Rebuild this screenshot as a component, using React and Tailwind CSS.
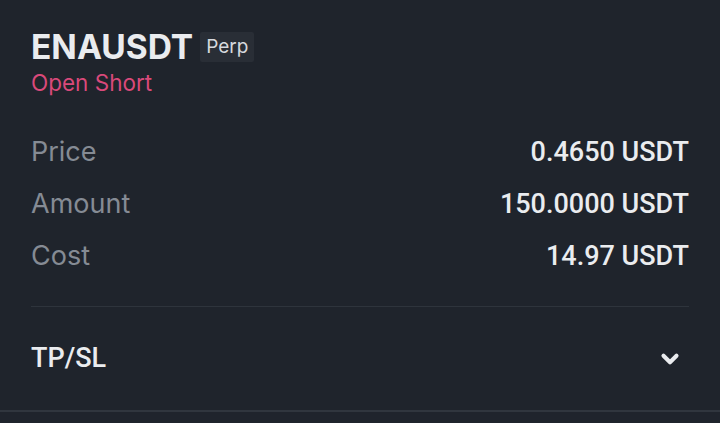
import { ChevronDown } from 'lucide-react';

const rows = [
  { label: 'Price', value: '0.4650 USDT' },
  { label: 'Amount', value: '150.0000 USDT' },
  { label: 'Cost', value: '14.97 USDT' },
];

export default function App() {
  return (
    <div className="w-[720px] h-[423px] bg-[#1f242c] overflow-hidden font-['Inter',sans-serif]">
      <div className="px-[31px] pt-[30px]">
        <div className="flex items-center gap-[7px]">
          <h1 className="text-[33.5px] leading-[34px] font-bold text-[#eaecef]">ENAUSDT</h1>
          <span className="bg-[#292e36] text-[#d6d9de] text-[19px] leading-[30px] px-[6px] rounded-[2px]">Perp</span>
        </div>
        <div className="mt-[5px] text-[22.5px] leading-[28px] text-[#d9497a]">Open Short</div>

        <div className="mt-[40px] flex flex-col gap-[22px]">
          {rows.map((r) => (
            <div key={r.label} className="flex items-center justify-between h-[30px]">
              <span className="text-[27px] text-[#858b94]">{r.label}</span>
              <span className="text-[27px] font-medium text-[#eaecef] font-['Roboto',sans-serif]">
                {r.value}
              </span>
            </div>
          ))}
        </div>

        <div className="mt-[35px] border-t border-[#2e343c]" />

        <div className="flex items-center justify-between h-[103px]">
          <span className="text-[27px] font-medium text-[#eaecef] font-['Roboto',sans-serif]">TP/SL</span>
          <ChevronDown className="w-[26px] h-[26px] text-[#eaecef] mr-[6px]" strokeWidth={3.8} />
        </div>
      </div>
      <div className="border-t-2 border-[#30363e]" />
    </div>
  );
}
